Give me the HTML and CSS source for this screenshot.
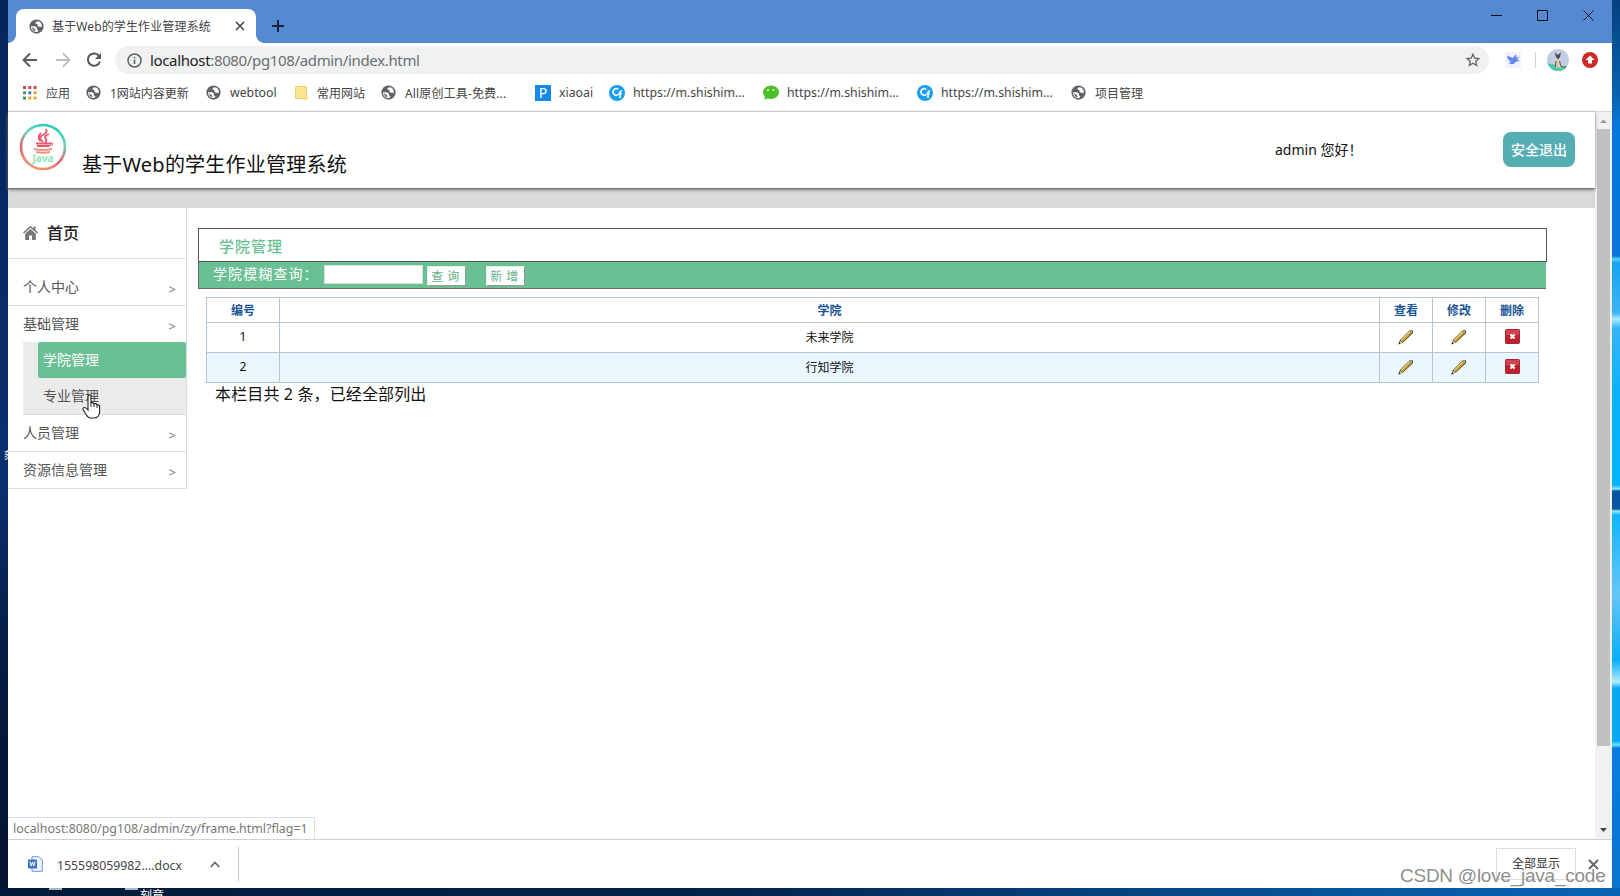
FILE: index.html
```
<!DOCTYPE html>
<html lang="zh-CN">
<head>
<meta charset="utf-8">
<title>基于Web的学生作业管理系统</title>
<link rel="stylesheet" href="styles.css">
</head>
<body>
<svg class="defs" width="0" height="0">
  <symbol id="globe" viewBox="0 0 16 16"><circle cx="8" cy="8" r="7.600" fill="#5f6368"/><path d="M2.200 7.600 6.500 7.800 8.600 9.300 8.300 10.800 10 12.200 9 13.900Q4.500 14.200 2.700 10.900 2 9.200 2.200 7.600zM8.600 2.300Q6.500 3 6.900 4.700L9.300 5.500 8.800 7l1.700 1.300 3.200.2Q14 5 11.500 3z" fill="#fff"/><path d="M3 8.200q1.500 2 3.200 2.500l.8 2.700Q3.500 12.500 3 8.200z" fill="#5f6368"/></symbol>
  <symbol id="cf" viewBox="0 0 16 16"><circle cx="8" cy="8" r="8" fill="#1a9ff0"/><path d="M9.300 4.300A3.300 3.300 0 1 0 9 9.800M13 6.200c-1.300-.5-2 .2-2 1.500V13M9.200 8.800h3.600" fill="none" stroke="#fff" stroke-width="1.600"/></symbol>
  <symbol id="pencil" viewBox="0 0 16 16"><path d="M.5 15.300 2 11 11.300 1.700Q13 .3 14.800 1.400 15.700 3 14.300 4.700L5 13.600z" fill="#4a3a1c"/><path d="m2.600 11.200 8.700-8.700.9.900-8.700 8.700z" fill="#fbe88a"/><path d="m3.500 12.200 8.800-8.700 1 1-8.700 8.700z" fill="#dba52b"/><path d="m11.300 2.300 1.500-1q1.700.2 1.500 1.800l-1 1.400z" fill="#b9a5a0"/><path d="m2.300 11.700 2 1.800-2.500 1z" fill="#ead6ad"/><path d="m.4 15.500.8-2.300 1.300 1.200z" fill="#222"/></symbol>
  <symbol id="del" viewBox="0 0 16 16"><rect x=".5" y=".5" width="15" height="15" rx="1" fill="#c01f30" stroke="#a01d2c"/><path d="M1 1h14v5.500H1z" fill="#d44453"/><path d="m5.800 5.800 4.400 4.400m0-4.400-4.400 4.400" stroke="#fff" stroke-width="2.200"/></symbol>
</svg>
<div class="desktop">
  <div class="desk-left"><span>刻</span></div>
  <div class="window">
    <div class="titlebar">
      <div class="tab"><svg width="15" height="15"><use href="#globe"/></svg><span class="tab-title">基于Web的学生作业管理系统</span><svg class="tab-x" width="10" height="10" viewBox="0 0 10 10"><path d="m1 1 8 8M9 1 1 9" stroke="#444" stroke-width="1.600"/></svg></div>
      <svg class="plus" width="12" height="12" viewBox="0 0 12 12"><path d="M6 0v12M0 6h12" stroke="#17263d" stroke-width="2"/></svg>
      <div class="win-controls">
        <svg width="11" height="11" viewBox="0 0 11 11"><path d="M0 5.500h11" stroke="#111"/></svg>
        <svg width="11" height="11" viewBox="0 0 11 11"><path d="M.5.5h10v10H.5z" fill="none" stroke="#111"/></svg>
        <svg width="11" height="11" viewBox="0 0 11 11"><path d="m.5.500 10 10m0-10-10 10" stroke="#111"/></svg>
      </div>
    </div>
    <div class="toolbar">
      <svg width="16" height="16" viewBox="0 0 16 16"><path d="M15 8H2M8 1.500 1.500 8 8 14.500" fill="none" stroke="#55585c" stroke-width="1.900"/></svg>
      <svg width="16" height="16" viewBox="0 0 16 16"><path d="M1 8h13M8 1.500 14.500 8 8 14.500" fill="none" stroke="#bcbdc0" stroke-width="1.800"/></svg>
      <svg width="16" height="16" viewBox="0 0 16 16"><path d="M13.300 4.200A6.200 6.200 0 1 0 14 9.500" fill="none" stroke="#55585c" stroke-width="2"/><path d="M15 1v6H9z" fill="#55585c"/></svg>
      <div class="omnibox">
        <svg width="15" height="15" viewBox="0 0 15 15"><circle cx="7.500" cy="7.500" r="6.500" fill="none" stroke="#5f6368" stroke-width="1.500"/><path d="M7.500 6.500V11M7.500 3.700v1.600" stroke="#5f6368" stroke-width="1.600"/></svg>
        <span class="url"><b>localhost</b>:8080/pg108/admin/index.html</span>
        <svg class="star" width="14" height="14" viewBox="0 0 14 14"><path d="m7 1.200 1.700 3.900 4.200.4-3.200 2.800 1 4.200L7 10.300l-3.700 2.200 1-4.200L1.100 5.500l4.200-.4z" fill="none" stroke="#5f6368" stroke-width="1.300"/></svg>
      </div>
      <div class="ext">
        <svg class="bird" width="16" height="16" viewBox="0 0 16 16"><rect width="16" height="16" fill="#f3f3ff"/><path d="M2 3.500 8 6l3-4 .3 3.500L15 4.500 12 7l3 2-3.700.4Q8 14 3.500 11L6 10Q2.500 8 2 3.500z" fill="#6888f2"/></svg>
        <i class="vline"></i>
        <svg class="avatar" width="22" height="22" viewBox="0 0 22 22"><defs><clipPath id="av"><circle cx="11" cy="11" r="11"/></clipPath></defs><g clip-path="url(#av)"><rect width="22" height="22" fill="#c2cde3"/><path d="M0 14q10 3 22 3v5H0z" fill="#48c9ae"/><path d="M9 9h3l1.500 6 4.500 3.500H8z" fill="#d9ceb0"/><path d="m7.500 3 2.500 2.500h1.500L14 3l-1 5-2 2.500L9 8z" fill="#4e4c50"/><path d="m12.500 12 1.500 5.500 5 1M9 12l-.5 6" fill="none" stroke="#54514e"/></g></svg>
        <svg width="16" height="16" viewBox="0 0 16 16"><circle cx="8" cy="8" r="8" fill="#cf2a27"/><path d="m8 3.500 4.500 4.500H10v3.500H6V8H3.500z" fill="#fff"/></svg>
      </div>
    </div>
    <div class="bookmarks">
      <div class="bm apps"><svg width="14" height="14" viewBox="0 0 14 14"><path d="M0 0h3v3H0zM5.300 0h3v3h-3zM10.600 0h3v3h-3z" fill="#d64b3f"/><path d="M0 5.300h3v3H0z" fill="#3c9b57"/><path d="M5.300 5.300h3v3h-3z" fill="#3f78d2"/><path d="M10.600 5.300h3v3h-3zM5.300 10.600h3v3h-3zM10.600 10.600h3v3h-3z" fill="#e2a72e"/><path d="M0 10.600h3v3H0z" fill="#3c9b57"/></svg><span>应用</span></div>
      <div class="bm b1"><svg width="15" height="15"><use href="#globe"/></svg><span>1网站内容更新</span></div>
      <div class="bm b2"><svg width="15" height="15"><use href="#globe"/></svg><span class="latin">webtool</span></div>
      <div class="bm b3"><svg width="13" height="14" viewBox="0 0 13 14"><path d="M.5.500h11v12h-11z" fill="#fbe38e" stroke="#ecd077"/><path d="M9 13.500h3.500V10" fill="#f4d66f"/></svg><span>常用网站</span></div>
      <div class="bm b4"><svg width="15" height="15"><use href="#globe"/></svg><span class="mixed">All原创工具-免费...</span></div>
      <div class="bm b5"><i class="pbox">P</i><span class="latin">xiaoai</span></div>
      <div class="bm b6"><svg width="16" height="16"><use href="#cf"/></svg><span class="latin">https://m.shishim...</span></div>
      <div class="bm b7"><svg width="16" height="16" viewBox="0 0 16 16"><ellipse cx="8" cy="7.200" rx="8" ry="6.700" fill="#4cbf2b"/><path d="m2 10-.4 4.500L6 13z" fill="#4cbf2b"/><circle cx="5" cy="5" r="1" fill="#e8ffe0"/><circle cx="10.500" cy="5" r="1" fill="#e8ffe0"/></svg><span class="latin">https://m.shishim...</span></div>
      <div class="bm b8"><svg width="16" height="16"><use href="#cf"/></svg><span class="latin">https://m.shishim...</span></div>
      <div class="bm b9"><svg width="15" height="15"><use href="#globe"/></svg><span>项目管理</span></div>
    </div>
    <div class="viewport">
      <div class="page">
        <header class="site-header">
          <svg class="logo" width="48" height="48" viewBox="0 0 48 48"><defs><linearGradient id="ring" x1=".65" y1="0" x2=".3" y2="1"><stop offset="0" stop-color="#1fd1b5"/><stop offset=".3" stop-color="#6fd0c0"/><stop offset=".65" stop-color="#e2606f"/><stop offset="1" stop-color="#f29a6d"/></linearGradient></defs><circle cx="24" cy="24" r="22" fill="#fff" stroke="url(#ring)" stroke-width="2.600"/><g fill="none" stroke="#e8596c" stroke-width="1.800"><path d="M27 6q2 4-4 6.500-4 3 1 6.500M30 11q-6 2-3 5 1 2-1 4M22 10q-4 4-1 8"/><path d="M17 20.500h15M18 23h12"/><path d="M31 20q4 0 2 2l-4 1" stroke-width="1.200"/><path d="M15 26q9 2 18 0M17 29q7 1.500 14 0" stroke="#f0937c"/></g><text x="24" y="39" text-anchor="middle" class="logo-text">Java</text></svg>
          <h1>基于Web的学生作业管理系统</h1>
          <span class="hello">admin 您好！</span>
          <a class="logout">安全退出</a>
        </header>
        <div class="band"></div>
        <div class="body">
          <nav class="sidebar">
            <div class="home"><svg width="15" height="15" viewBox="0 0 15 15"><path d="M0 7.500 7.500.7l3 2.700V1.500h2v3.700L15 7.500l-1 1L7.500 2.800 1 8.500z" fill="#777"/><path d="m2.200 8.700 5.300-4.600 5.300 4.600V15H9v-4.500H6V15H2.200z" fill="#777"/></svg><span>首页</span></div>
            <div class="item first"><span>个人中心</span><em>&gt;</em></div>
            <div class="item open"><span>基础管理</span><em>&gt;</em></div>
            <div class="sub"><div class="on">学院管理</div><div>专业管理</div></div>
            <div class="item"><span>人员管理</span><em>&gt;</em></div>
            <div class="item"><span>资源信息管理</span><em>&gt;</em></div>
          </nav>
          <main>
            <div class="panel-title">学院管理</div>
            <div class="query"><span class="q-label">学院模糊查询：</span><i class="input"></i><span class="btn">查 询</span><span class="btn add">新 增</span></div>
            <div class="grid">
              <b>编号</b><b>学院</b><b>查看</b><b>修改</b><b>删除</b>
              <div class="c">1</div><div class="c">未来学院</div><div class="c"><svg width="16" height="16"><use href="#pencil"/></svg></div><div class="c"><svg width="16" height="16"><use href="#pencil"/></svg></div><div class="c"><svg width="15" height="15"><use href="#del"/></svg></div>
              <div class="c alt">2</div><div class="c alt">行知学院</div><div class="c alt"><svg width="16" height="16"><use href="#pencil"/></svg></div><div class="c alt"><svg width="16" height="16"><use href="#pencil"/></svg></div><div class="c alt"><svg width="15" height="15"><use href="#del"/></svg></div>
            </div>
            <p class="total">本栏目共 2 条，已经全部列出</p>
          </main>
        </div>
      </div>
      <div class="scroll"><svg width="13" height="17" viewBox="0 0 13 17"><path d="m3 11 3.500-3.500L10 11z" fill="#999"/></svg><i class="thumb"></i><svg class="down" width="13" height="17" viewBox="0 0 13 17"><path d="m3 6 3.500 4L10 6z" fill="#444"/></svg></div>
      <div class="status">localhost:8080/pg108/admin/zy/frame.html?flag=1</div>
    </div>
    <div class="downloads">
      <svg width="15" height="16" viewBox="0 0 15 16"><path d="M4 .7h7L14.300 4v11.300H4z" fill="#edf4ff" stroke="#6c98d9"/><path d="M0 3.500h9v9H0z" fill="#4275c8"/><path d="m2 5.500 1.200 4.500 1.300-4 1.300 4L7 5.500" fill="none" stroke="#fff"/></svg>
      <span class="file">155598059982....docx</span>
      <svg class="chev" width="10" height="7" viewBox="0 0 10 7"><path d="m.8 6 4.200-4.500L9.200 6" fill="none" stroke="#666" stroke-width="1.700"/></svg>
      <i class="dsep"></i>
      <span class="showall">全部显示</span>
      <svg class="dx" width="11" height="11" viewBox="0 0 11 11"><path d="m1 1 9 9m0-9-9 9" stroke="#666" stroke-width="1.900"/></svg>
    </div>
  </div>
  <div class="desk-right"></div>
  <div class="desk-bottom"><i></i><i></i><span>刻章</span></div>
</div>
<svg class="cursor" width="19" height="25" viewBox="0 0 19 25"><path d="M6 14V3q0-2 1.500-2T9 3v6q3-1 3 1 3-1 3 1 2.600-.6 2.600 2v5q0 5-5 6H9q-3 0-4.500-3L1 15.500q-.4-2 1.500-2Q4 13.500 6 16z" fill="#fff" stroke="#222" stroke-width="1.100"/><path d="M9 8v5m3-3.500V13m3-2.500V14" stroke="#222" stroke-width=".9"/></svg>
<div class="watermark">CSDN @love_java_code</div>
</body>
</html>
```
FILE: styles.css
```
* { box-sizing: border-box; }
body { margin: 0; width: 1620px; height: 896px; overflow: hidden; position: relative; font-family: "Noto Sans", "Noto Sans CJK SC", sans-serif; font-size: 12px; color: #333; }
svg { display: block; flex: none; }
span, a, em, b { white-space: nowrap; }
i, em { font-style: normal; }
.defs { position: absolute; }
.desktop { display: grid; grid-template-columns: 8px 1604px 8px; grid-template-rows: 888px 8px; height: 896px; }
.desk-left { background: linear-gradient(#06255a, #082f6d 55%, #051b40 75%, #03142f); color: #fff; font-size: 10px; overflow: hidden; padding: 448px 0 0 4px; line-height: 14px; }
.desk-right { background: linear-gradient(#05407e 0, #0864b4 100px, #0678db 125px, #0773d8 256px, #55d5ff 259px, #16a3f2 263px, #3fb4f5 313px, #a6eaff 319px, #35b5f7 328px, #0ab1fa 390px, #02b3ff 485px, #8feaff 489px, #0755a3 491px, #0755a3 509px, #9decff 511px, #10b5ff 515px, #66c6f6 595px, #08acf7 660px, #b1edff 682px, #08a7f5 688px, #08a7f5 741px, #66e4ff 745px, #087cdf 748px, #0873d1); }
.desk-bottom { grid-column: 1 / 4; background: linear-gradient(90deg, #021a38 0, #03234c 45%, #0758a0 85%, #0863b5); color: #fff; overflow: hidden; display: flex; font-size: 12px; line-height: 16px; }
.desk-bottom i { width: 13px; height: 2px; background: #a8b8cc; margin-left: 49px; }
.desk-bottom i + i { margin-left: 63px; }
.desk-bottom span { margin-left: 2px; }
.window { background: #fff; display: flex; flex-direction: column; }

.titlebar { height: 43px; background: #558ad3; display: flex; align-items: flex-start; border-bottom: 1px solid #4d7fc4; }
.tab { margin: 9px 0 0 8px; width: 240px; height: 34px; background: #fff; border-radius: 8px 8px 0 0; display: flex; align-items: center; padding-left: 13px; position: relative; }
.tab::before, .tab::after { content: ""; position: absolute; bottom: 0; width: 8px; height: 8px; }
.tab::before { left: -8px; background: radial-gradient(circle at 0 0, transparent 7.5px, #fff 8px); }
.tab::after { right: -8px; background: radial-gradient(circle at 100% 0, transparent 7.5px, #fff 8px); }
.tab-title { margin-left: 8px; width: 160px; font-size: 12px; color: #444; letter-spacing: .13px; }
.tab-x { margin-left: 23px; }
.plus { margin: 20px 0 0 16px; }
.win-controls { margin: 10px 18px 0 auto; display: flex; gap: 35px; }

.toolbar { height: 35px; display: flex; align-items: center; padding: 0 0 1px 14px; }
.toolbar > svg { margin-right: 17px; }
.toolbar > svg:nth-child(2) { margin-right: 15px; }
.toolbar > svg:nth-child(3) { margin-right: 13px; }
.omnibox { width: 1374px; height: 28px; border-radius: 14px; background: #f0f2f2; display: flex; align-items: center; padding: 0 9px 0 12px; }
.url { margin-left: 8px; font-size: 15px; color: #6a6e72; letter-spacing: -.35px; }
.url b { font-weight: 400; color: #222; }
.star { margin-left: auto; }
.ext { display: flex; align-items: center; }
.bird { margin-left: 16px; }
.vline { width: 1px; height: 16px; background: #d8cfd0; margin: 0 11px 0 14px; }
.avatar { margin-right: 13px; }

.bookmarks { height: 34px; border-bottom: 1px solid #d6d7d8; display: flex; align-items: center; padding: 0 0 4px 15px; color: #444; }
.bm { display: flex; align-items: center; }
.bm span { margin-left: 9px; }
.bm.apps { width: 63px; }
.b1 { width: 120px; }
.b2 { width: 89px; }
.b3 { width: 86px; }
.b4 { width: 154px; }
.b4 .mixed { letter-spacing: .15px; }
.b5 { width: 74px; }
.b6, .b7 { width: 154px; }
.b8 { width: 154px; }
.bm .latin { font-size: 12.3px; margin-left: 8px; }
.b2 .latin { margin-left: 9px; }
.pbox { width: 16px; height: 16px; background: #1289e8; color: #fff; font-size: 14px; line-height: 16px; text-align: center; }

.viewport { height: 728px; display: flex; position: relative; border-bottom: 1px solid #d0d0d0; }
.page { width: 1587px; }
.scroll { width: 17px; background: #f1f1f1; display: flex; flex-direction: column; padding: 0 2px; }
.thumb { height: 617px; background: #c1c1c1; }
.down { margin-top: auto; }
.site-header { height: 77px; display: flex; align-items: flex-start; border-bottom: 1px solid #777; box-shadow: 0 1px 3px #777; position: relative; color: #111; }
.logo { margin: 11px 0 0 11px; }
.logo-text { font: bold 10px "Noto Sans", sans-serif; fill: #8fe3b8; }
.site-header h1 { font-size: 20px; font-weight: 400; line-height: 28px; margin: 39px 0 0 15px; width: 270px; white-space: nowrap; color: #111; letter-spacing: .22px; }
.hello { margin: 28px 0 0 auto; width: 228px; font-size: 14px; line-height: 20px; }
.logout { margin: 20px 20px 0 0; width: 72px; height: 35px; border-radius: 8px; background: #54aeb3; color: #fff; font-size: 14px; font-weight: 500; line-height: 35px; text-align: center; }
.band { height: 19px; background: #d8dadc; }
.body { display: flex; align-items: flex-start; }
.sidebar { width: 179px; height: 281px; border-right: 1px solid #d9d9d9; font-size: 14px; color: #555; }
.home { height: 51px; border-bottom: 1px solid #ddd; display: flex; align-items: center; padding: 0 0 2px 15px; font-size: 16px; font-weight: 500; color: #222; }
.home span { margin-left: 9px; }
.item { height: 37px; border-bottom: 1px solid #ddd; display: flex; align-items: center; justify-content: space-between; padding: 0 10px 2px 15px; }
.item em { font-size: 13px; color: #777; padding-top: 5px; }
.item.first { height: 47px; padding-top: 10px; }
.item.open { height: 36px; border: 0; }
.sub { margin-left: 15px; padding-left: 15px; background: #ebebeb; height: 73px; border-bottom: 1px solid #ddd; }
.sub div { height: 36px; line-height: 36px; padding-left: 5px; }
.sub .on { background: #69c092; color: #fff; border-radius: 2px; }
main { margin: 20px 0 0 11px; width: 1349px; }
.panel-title { height: 34px; border: 1px solid #555; color: #69c092; font-size: 15px; font-weight: 500; letter-spacing: 1px; line-height: 34px; padding-left: 20px; }
.query { width: 1348px; height: 27px; background: #69c092; border-left: 1px solid #666; border-bottom: 1px solid #666; display: flex; align-items: center; padding: 0 0 2px 14px; color: #fff; }
.q-label { width: 111px; font-size: 14px; letter-spacing: 1.1px; line-height: 24px; }
.input { width: 99px; height: 19px; background: #fff; border: 1px solid #ddd; margin-right: 4px; }
.btn { width: 39px; height: 20px; background: #fff; border: 1px solid #e6efe9; border-right-color: #999; border-bottom-color: #999; color: #5fb187; font-size: 12px; letter-spacing: .5px; line-height: 20px; text-align: center; margin-top: 3px; padding-right: 2px; }
.btn.add { margin-left: 20px; }
.grid { margin: 8px 0 0 8px; width: 1333px; display: grid; grid-template-columns: 73px 1100px 53px 53px 53px; grid-template-rows: 25px 30px 30px; border: 1px solid #b5c5d2; border-width: 1px 0 0 1px; color: #111; }
.grid > * { display: flex; align-items: center; justify-content: center; border: 1px solid #b5c5d2; border-width: 0 1px 1px 0; }
.grid b { color: #1a5494; font-weight: 700; }
.grid .c { padding-bottom: 2px; }
.alt { background: #eaf7ff; }
.total { margin: 0 0 0 17px; font-size: 16px; line-height: 22px; color: #111; white-space: nowrap; letter-spacing: .13px; }
.status { position: absolute; left: 0; bottom: 0; width: 307px; height: 22px; border: 1px solid #ddd; border-width: 1px 1px 0 0; background: #fff; color: #777; font-size: 12.4px; line-height: 21px; padding-left: 5px; white-space: nowrap; }
.downloads { height: 48px; display: flex; align-items: center; padding-left: 20px; }
.file { margin-left: 14px; width: 127px; font-size: 12.3px; color: #444; padding-top: 2px; }
.chev { margin-left: 26px; }
.dsep { width: 1px; height: 34px; background: #ccc; margin-left: 18px; }
.showall { margin-left: auto; width: 80px; height: 32px; border: 1px solid #ddd; text-align: center; line-height: 30px; }
.dx { margin: 0 13px 0 12px; }
.cursor { position: absolute; left: 82px; top: 394px; }
.watermark { position: absolute; left: 1400px; top: 862px; font: 19px/28px "Liberation Sans", Arial, sans-serif; letter-spacing: -.25px; color: rgba(120, 120, 120, .85); white-space: nowrap; }
```
